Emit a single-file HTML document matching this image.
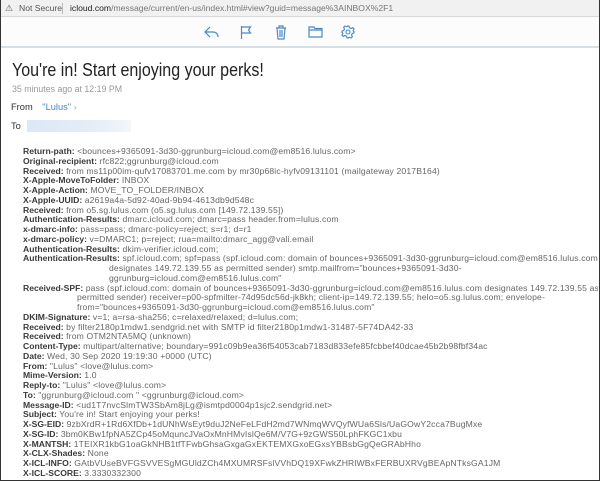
<!DOCTYPE html>
<html><head><meta charset="utf-8"><style>
*{margin:0;padding:0;box-sizing:border-box}
html,body{width:600px;height:481px;overflow:hidden;background:#fff;font-family:"Liberation Sans",sans-serif}
.frame{position:absolute;left:0;top:0;width:600px;height:481px;border:1px solid #333;border-top:none}
.addr{position:absolute;left:0;top:0;width:600px;height:17px;background:#f1f1f1;border-bottom:1px solid #d8d8d8;font-size:8.6px;line-height:17px;color:#555;white-space:nowrap}
.addr .w{position:absolute;left:5px;top:0;font-size:9px}
.addr .ns{position:absolute;left:19px}
.addr .sep{position:absolute;left:62px;top:3px;width:1px;height:11px;background:#bbb}
.addr .url{position:absolute;left:70px;color:#777}
.addr .url b{color:#222;font-weight:normal}
.tb{position:absolute;left:1px;top:17px;width:598px;height:31px;background:#fcfcfc;border-bottom:2px solid #d5dfe4}
.tb svg{position:absolute;top:8px}
.title{position:absolute;left:12px;top:60px;font-size:18px;color:#222;white-space:nowrap;transform:scaleX(0.89);transform-origin:0 0}
.time{position:absolute;left:12px;top:84px;font-size:8.8px;color:#999}
.from{position:absolute;left:11px;top:102px;font-size:9.3px;color:#333}
.from span{color:#3d87c8;margin-left:7px}
.from i{font-style:normal;color:#aaa}
.to{position:absolute;left:11px;top:121px;font-size:9.3px;color:#333}
.blur{position:absolute;left:27px;top:120px;width:104px;height:12px;background:linear-gradient(90deg,#dbe8f5,#e6eef7 70%,#f3f6f9)}
.hdr{position:absolute;left:23px;top:147px;width:575px;font-size:8.6px;line-height:9.75px;color:#666;white-space:nowrap;letter-spacing:0.15px;overflow:hidden}
.hdr b{color:#3a3a3a;font-weight:bold;letter-spacing:0}
.hdr .ind{padding-left:86px}
.hdr .ind2{padding-left:54px}
</style></head><body>
<div class="addr"><span class="w">&#9888;</span><span class="ns">Not Secure</span><span class="sep"></span><span class="url"><b>icloud.com</b>/message/current/en-us/index.html#view?guid=message%3AINBOX%2F1</span></div>
<div class="tb">
<svg style="left:203px" width="16" height="14" viewBox="0 0 16 14" fill="none" stroke="#4a8ac4" stroke-width="1.2"><path d="M6 2L1 7l5 5M1 7h8c3 0 5 2 5 5"/></svg>
<svg style="left:239px" width="12" height="14" viewBox="0 0 12 14" fill="none" stroke="#4a8ac4" stroke-width="1.2"><path d="M1.5 1v13M1.5 2h9l-2 3 2 3h-9"/></svg>
<svg style="left:274px" width="12" height="15" viewBox="0 0 12 15" fill="none" stroke="#4a8ac4" stroke-width="1.2"><path d="M1 3h10M4 3V1h4v2M2 3l1 11h6l1-11M5 5v7M7 5v7"/></svg>
<svg style="left:307px" width="15" height="13" viewBox="0 0 15 13" fill="none" stroke="#4a8ac4" stroke-width="1.2"><path d="M1 2h5l1 1.5h7V12H1zM1 5h13"/></svg>
<svg style="left:340px" width="14" height="14" viewBox="0 0 14 14" fill="none" stroke="#4a8ac4" stroke-width="1.1"><circle cx="7" cy="7" r="2"/><path d="M6 1h2l.5 1.8 1.6.7 1.6-.9 1.4 1.4-.9 1.6.7 1.6L13 6v2l-1.8.5-.7 1.6.9 1.6-1.4 1.4-1.6-.9-1.6.7L8 13H6l-.5-1.8-1.6-.7-1.6.9-1.4-1.4.9-1.6-.7-1.6L1 8V6l1.8-.5.7-1.6-.9-1.6 1.4-1.4 1.6.9 1.6-.7z"/></svg>
</div>
<div class="title">You're in! Start enjoying your perks!</div>
<div class="time">35 minutes ago at 12:19 PM</div>
<div class="from">From <span>"Lulus"</span> <i>&#8250;</i></div>
<div class="to">To</div><div class="blur"></div>
<div class="hdr">
<div><b>Return-path:</b> &lt;bounces+9365091-3d30-ggrunburg=icloud.com@em8516.lulus.com&gt;</div>
<div><b>Original-recipient:</b> rfc822;ggrunburg@icloud.com</div>
<div><b>Received:</b> from ms11p00im-qufv17083701.me.com by mr30p68ic-hyfv09131101 (mailgateway 2017B164)</div>
<div><b>X-Apple-MoveToFolder:</b> INBOX</div>
<div><b>X-Apple-Action:</b> MOVE_TO_FOLDER/INBOX</div>
<div><b>X-Apple-UUID:</b> a2619a4a-5d92-40ad-9b94-4613db9d548c</div>
<div><b>Received:</b> from o5.sg.lulus.com (o5.sg.lulus.com [149.72.139.55])</div>
<div><b>Authentication-Results:</b> dmarc.icloud.com; dmarc=pass header.from=lulus.com</div>
<div><b>x-dmarc-info:</b> pass=pass; dmarc-policy=reject; s=r1; d=r1</div>
<div><b>x-dmarc-policy:</b> v=DMARC1; p=reject; rua=mailto:dmarc_agg@vali.email</div>
<div><b>Authentication-Results:</b> dkim-verifier.icloud.com;</div>
<div><b>Authentication-Results:</b> spf.icloud.com; spf=pass (spf.icloud.com: domain of bounces+9365091-3d30-ggrunburg=icloud.com@em8516.lulus.com</div>
<div class="ind">designates 149.72.139.55 as permitted sender) smtp.mailfrom="bounces+9365091-3d30-</div>
<div class="ind">ggrunburg=icloud.com@em8516.lulus.com"</div>
<div><b>Received-SPF:</b> pass (spf.icloud.com: domain of bounces+9365091-3d30-ggrunburg=icloud.com@em8516.lulus.com designates 149.72.139.55 as</div>
<div class="ind2">permitted sender) receiver=p00-spfmilter-74d95dc56d-jk8kh; client-ip=149.72.139.55; helo=o5.sg.lulus.com; envelope-</div>
<div class="ind2">from="bounces+9365091-3d30-ggrunburg=icloud.com@em8516.lulus.com"</div>
<div><b>DKIM-Signature:</b> v=1; a=rsa-sha256; c=relaxed/relaxed; d=lulus.com;</div>
<div><b>Received:</b> by filter2180p1mdw1.sendgrid.net with SMTP id filter2180p1mdw1-31487-5F74DA42-33</div>
<div><b>Received:</b> from OTM2NTA5MQ (unknown)</div>
<div><b>Content-Type:</b> multipart/alternative; boundary=991c09b9ea36f54053cab7183d833efe85fcbbef40dcae45b2b98fbf34ac</div>
<div><b>Date:</b> Wed, 30 Sep 2020 19:19:30 +0000 (UTC)</div>
<div><b>From:</b> "Lulus" &lt;love@lulus.com&gt;</div>
<div><b>Mime-Version:</b> 1.0</div>
<div><b>Reply-to:</b> "Lulus" &lt;love@lulus.com&gt;</div>
<div><b>To:</b> "ggrunburg@icloud.com " &lt;ggrunburg@icloud.com&gt;</div>
<div><b>Message-ID:</b> &lt;ud1T7nvcSlmTW3SbAm8jLg@ismtpd0004p1sjc2.sendgrid.net&gt;</div>
<div><b>Subject:</b> You're in! Start enjoying your perks!</div>
<div><b>X-SG-EID:</b> 9zbXrdR+1Rd6XfDb+1dUNhWsEyt9duJ2NeFeLFdH2md7WNmqWVQyfWUa6Sls/UaGOwY2cca7BugMxe</div>
<div><b>X-SG-ID:</b> 3bm0KBw1fpNA5ZCp45oMquncJVaOxMnHMvIslQe6M/V7G+9zGWS50LphFKGC1xbu</div>
<div><b>X-MANTSH:</b> 1TEIXR1kbG1oaGkNHB1tfTFwbGhsaGxgaGxEKTEMXGxoEGxsYBBsbGgQeGRAbHho</div>
<div><b>X-CLX-Shades:</b> None</div>
<div><b>X-ICL-INFO:</b> GAtbVUseBVFGSVVESgMGUldZCh4MXUMRSFslVVhDQ19XFwkZHRlWBxFERBUXRVgBEApNTksGA1JM</div>
<div><b>X-ICL-SCORE:</b> 3.3330332300</div>
</div>
<div class="frame"></div>
</body></html>
